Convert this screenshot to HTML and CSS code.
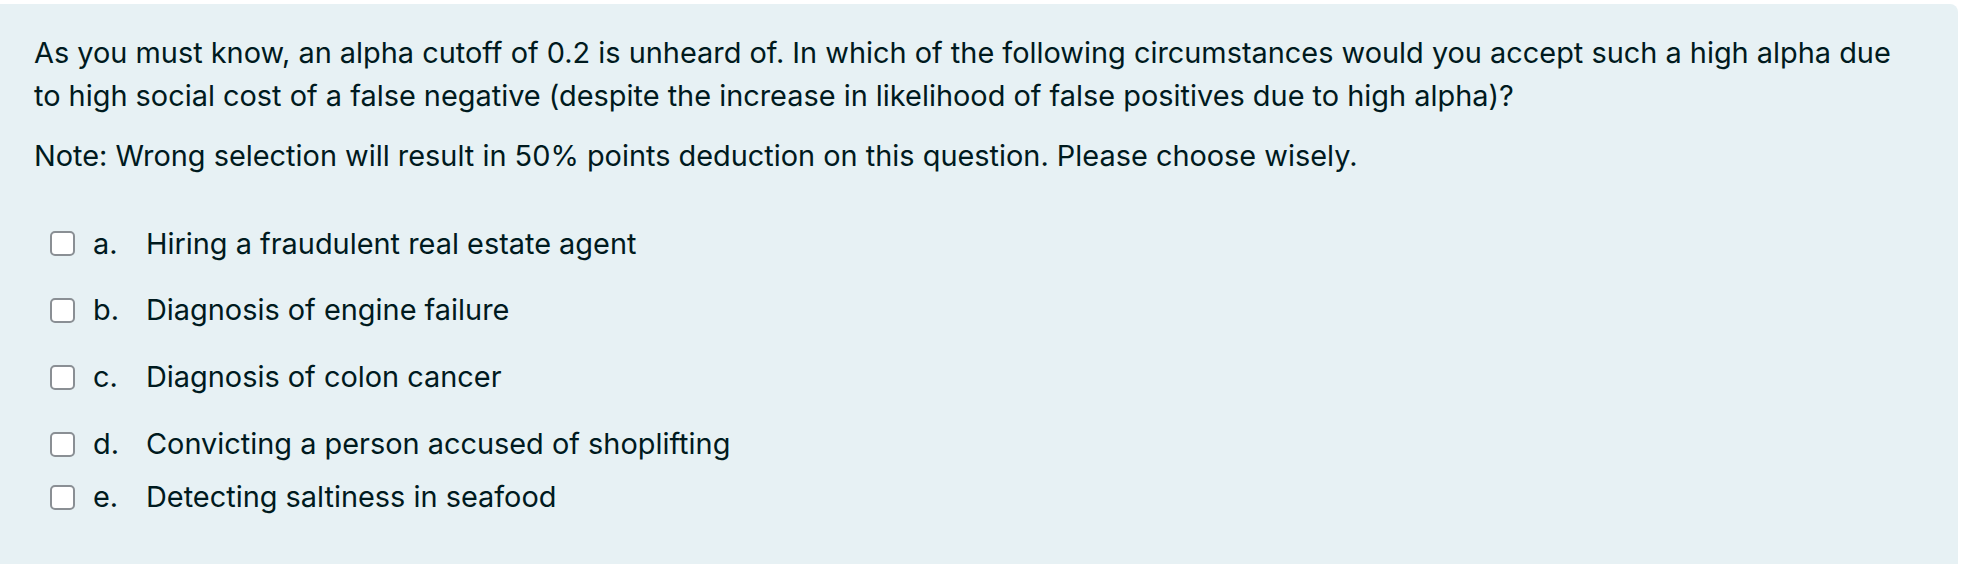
FILE: index.html
```html
<!DOCTYPE html>
<html lang="en">
<head>
<meta charset="utf-8">
<title>Question</title>
<link rel="stylesheet" href="styles.css">
</head>
<body>
<div class="formulation">
  <div class="qtext">
    <p>As you must know, an alpha cutoff of 0.2 is unheard of. In which of the following circumstances would you accept such a high alpha due to high social cost of a false negative (despite the increase in likelihood of false positives due to high alpha)?</p>
    <p>Note: Wrong selection will result in 50% points deduction on this question. Please choose wisely.</p>
  </div>
  <div class="answer">
    <div class="opt"><span class="cb"></span><span class="num">a.</span><span class="lbl">Hiring a fraudulent real estate agent</span></div>
    <div class="opt"><span class="cb"></span><span class="num">b.</span><span class="lbl">Diagnosis of engine failure</span></div>
    <div class="opt"><span class="cb"></span><span class="num">c.</span><span class="lbl">Diagnosis of colon cancer</span></div>
    <div class="opt"><span class="cb"></span><span class="num">d.</span><span class="lbl">Convicting a person accused of shoplifting</span></div>
    <div class="opt tight"><span class="cb"></span><span class="num">e.</span><span class="lbl">Detecting saltiness in seafood</span></div>
  </div>
</div>
</body>
</html>
```

FILE: styles.css
```css
html, body {
  margin: 0;
  padding: 0;
  background: #ffffff;
}
body {
  font-family: Inter, "Noto Sans", "Liberation Sans", sans-serif;
  font-size: 28.9px;
  line-height: 42.7px;
  color: #001a1e;
  overflow: hidden;
}
.formulation {
  margin-top: 4px;
  width: 1958px;
  box-sizing: border-box;
  background: #e7f1f4;
  border-radius: 0 8px 8px 0;
  padding: 28px 56px 80px 34px;
}
.qtext p {
  margin: 0 0 17.5px 0;
}
.qtext p:last-child {
  margin-bottom: 0;
}
.answer {
  margin-top: 45px;
  display: flex;
  flex-direction: column;
  gap: 24px;
}
.opt {
  display: flex;
  align-items: center;
  padding-left: 16px;
}
.opt.tight {
  margin-top: -13px;
}
.cb {
  width: 25px;
  height: 25px;
  box-sizing: border-box;
  border: 2px solid #8a8f94;
  border-radius: 5px;
  background: #ffffff;
  flex: none;
}
.num {
  width: 53px;
  margin-left: 18px;
  flex: none;
}
```
